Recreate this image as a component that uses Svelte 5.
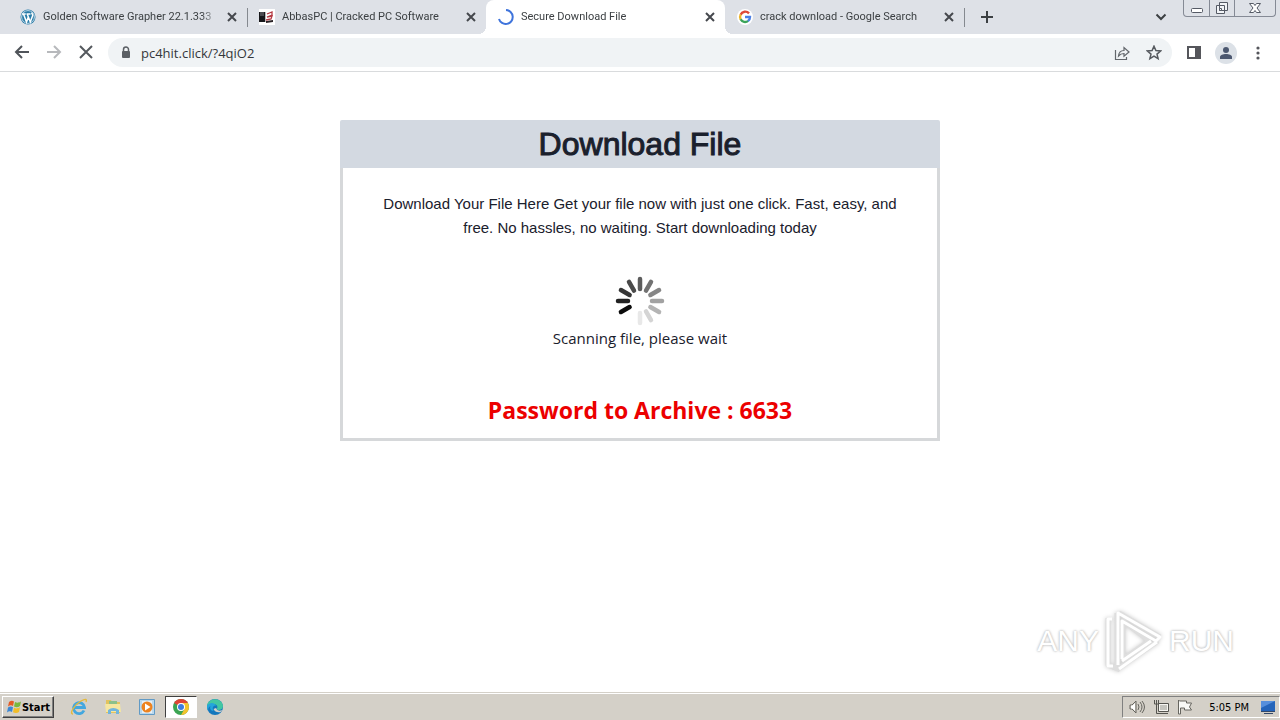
<script lang="ts">
    const tabs = [
        { icon: "wordpress", title: "Golden Software Grapher 22.1.333" },
        { icon: "abbas", title: "AbbasPC | Cracked PC Software" },
        { icon: "loading", title: "Secure Download File" },
        { icon: "google", title: "crack download - Google Search" }
    ];

    let active = $state(2);
    let address = $state("pc4hit.click/?4qiO2");

    // spokes clockwise from the top, fading towards the bottom
    const spokes = [
        "#5c5c5c", "#727272", "#868686", "#a2a2a2", "#b4b4b4", "#d4d4d4",
        "#e8e8e8", "transparent", "#0c0c0c", "#222222", "#363636", "#4a4a4a"
    ].map((color, i) => ({ color, angle: i * 30 }));
</script>

<svelte:head>
    <title>Secure Download File</title>
</svelte:head>

<div class="screen">
    <header class="tabstrip">
        <nav class="tabs" aria-label="Tabs">
            {#each tabs as tab, i}
                <div class="tab" class:active={active === i} class:divided={i === 0 || i === 3}>
                    <button class="tab-main" onclick={() => (active = i)}>
                        <svg viewBox="0 0 16 16" aria-hidden="true">
                            {#if tab.icon === "wordpress"}
                                <circle cx="8" cy="8" r="7.5" fill="#287ba8" />
                                <circle cx="8" cy="8" r="6.4" fill="none" stroke="#fff" stroke-width=".7" />
                                <path d="M2 5h3.8M6.5 5h4M3.5 5l3 8L8.3 8M7.2 5l3.1 8 2.4-6.5c.2-1.2-.9-1.6-1-2.9" fill="none" stroke="#fff" stroke-width="1.5" />
                            {:else if tab.icon === "abbas"}
                                <path fill="#fff" d="M0 0h16v16H0z" />
                                <path fill="#17171b" d="M0 3h6v10H0z" />
                                <path d="M1 3h4v4H1z" fill="#4b4b50" />
                                <path d="M7 12l7-1v2l-7 1z" fill="#2b2226" />
                                <path d="M8 5l5-2v3L8 8l5-1-1 3-5 1" fill="none" stroke="#b53a43" stroke-width="1.3" />
                                <path d="M6.500 3v10" stroke="#bbb" />
                            {:else if tab.icon === "loading"}
                                <path d="M8 1a7 7 0 1 1-7 9" fill="none" stroke="#3f74dc" stroke-width="2" />
                            {:else}
                                <circle cx="8" cy="8" r="8" fill="#fff" />
                                <g fill="none" stroke-width="2.4">
                                    <path d="M12 4.4A5 5 0 0 0 3.6 5.7" stroke="#df4937" />
                                    <path d="M3.7 5.5a5 5 0 0 0 0 5" stroke="#edb52b" />
                                    <path d="M3.6 10.3a5 5 0 0 0 7.6 1.5" stroke="#3ba45a" />
                                    <path d="M8 8h5c0 1.8-.6 3-2 4" stroke="#4b7fe5" />
                                </g>
                            {/if}
                        </svg>
                        <span class="tab-title">{tab.title}</span>
                    </button>
                    <button class="tab-close" aria-label="Close tab">
                        <svg viewBox="0 0 16 16"><path d="M4 4l8 8M12 4l-8 8" stroke="#45484d" stroke-width="2" /></svg>
                    </button>
                </div>
            {/each}
        </nav>
        <button class="new-tab" aria-label="New tab">
            <svg viewBox="0 0 16 16"><path d="M8 2v12M2 8h12" stroke="#3c4043" stroke-width="2" /></svg>
        </button>
        <button class="tab-search" aria-label="Search tabs">
            <svg viewBox="0 0 16 16"><path d="M3.500 5.500L8 10 12.500 5.500" fill="none" stroke="#3c4043" stroke-width="2" /></svg>
        </button>
        <div class="window-controls">
            <button aria-label="Minimize">
                <svg viewBox="0 0 16 16"><rect x="2.500" y="8.500" width="11" height="4" rx="1" fill="#fff" stroke="#555a65" /></svg>
            </button>
            <button aria-label="Restore">
                <svg viewBox="0 0 16 16">
                    <path d="M5.500 2.500h8v8h-8zM2.500 5.500h8v8h-8z" fill="#f2f4f7" stroke="#555a65" />
                    <path d="M5.500 8.500h2v2h-2z" fill="#fff" stroke="#555a65" />
                </svg>
            </button>
            <button class="wide" aria-label="Close">
                <svg viewBox="0 0 16 16"><path d="M2.500 3.500h4L8 5.500l1.500-2h4l-3.500 4.500 3.500 4.500h-4L8 10.500l-1.500 2h-4L6 8z" fill="#fff" stroke="#555a65" /></svg>
            </button>
        </div>
    </header>

    <div class="toolbar">
        <button class="tool" aria-label="Back">
            <svg viewBox="0 0 16 16"><path d="M15 7H2M8 1L2 7l6 6" fill="none" stroke="#50545a" stroke-width="2" /></svg>
        </button>
        <button class="tool" aria-label="Forward" disabled>
            <svg viewBox="0 0 16 16"><path d="M1 7h13M8 1l6 6-6 6" fill="none" stroke="#b7b9bc" stroke-width="2" /></svg>
        </button>
        <button class="tool" aria-label="Stop">
            <svg viewBox="0 0 16 16"><path d="M2 1l12 12M14 1L2 13" stroke="#55595e" stroke-width="2" /></svg>
        </button>
        <div class="omnibox">
            <button class="lock" aria-label="Site information">
                <svg viewBox="0 0 16 16">
                    <rect x="4" y="6" width="8" height="7" rx="1" fill="#5b5f64" />
                    <path d="M5.500 7V4.500a2.500 2.500 0 0 1 5 0V7" fill="none" stroke="#5b5f64" stroke-width="1.500" />
                </svg>
            </button>
            <input type="text" aria-label="Address" bind:value={address} spellcheck="false" />
            <button class="tool" aria-label="Share">
                <svg viewBox="0 0 16 16"><path d="M1.500 5v9.500h11V12M4.500 11c.3-3.500 2-5.500 5.500-5.500v-3l5 4.500-5 4.200V8.500C7.500 8.500 6 9.200 4.500 11z" fill="none" stroke="#62666b" stroke-width="1.200" /></svg>
            </button>
            <button class="tool" aria-label="Bookmark this tab">
                <svg viewBox="0 0 16 16"><path d="M8 1.200l1.900 4.400 4.700.4-3.600 3.100 1.100 4.600L8 11.200l-4.100 2.500L5 9.100 1.400 6l4.700-.4z" fill="none" stroke="#55595e" stroke-width="1.500" /></svg>
            </button>
        </div>
        <button class="tool" aria-label="Side panel">
            <svg viewBox="0 0 16 16"><path d="M2 2h12v11H2z" fill="none" stroke="#55565b" stroke-width="2" /><path d="M9 2h5v11H9z" fill="#55565b" /></svg>
        </button>
        <button class="tool avatar" aria-label="Profile">
            <svg viewBox="0 0 22 22">
                <circle cx="11" cy="11" r="11" fill="#dce1e7" />
                <circle cx="11" cy="8" r="3" fill="#4c5870" />
                <path d="M5 17v-2c0-4 12-4 12 0v2z" fill="#4c5870" />
            </svg>
        </button>
        <button class="tool" aria-label="Menu">
            <svg viewBox="0 0 16 16" fill="#55565b"><circle cx="8" cy="3" r="1.600" /><circle cx="8" cy="8" r="1.600" /><circle cx="8" cy="13" r="1.600" /></svg>
        </button>
    </div>

    <main class="page">
        <section class="card">
            <h1>Download File</h1>
            <div class="card-body">
                <p class="intro">
                    Download Your File Here Get your file now with just one click. Fast, easy, and
                    free. No hassles, no waiting. Start downloading today
                </p>
                <svg class="spinner" viewBox="0 0 50 50" aria-hidden="true">
                    {#each spokes as spoke}
                        <path
                            d="M25 3v10"
                            stroke={spoke.color}
                            stroke-width="4.5"
                            stroke-linecap="round"
                            transform="rotate({spoke.angle} 25 25)"
                        />
                    {/each}
                </svg>
                <p class="status" role="status">Scanning file, please wait</p>
                <p class="password">Password to Archive : 6633</p>
            </div>
        </section>

        <div class="watermark">
            <span>ANY</span>
            <svg viewBox="0 0 58 64" aria-hidden="true">
                <g fill="none" stroke="#dedede" stroke-width="5" stroke-linejoin="round">
                    <path d="M12 4v53M14 4l41 24M3 9v47l12 5M53 32L14 59M18 12v38l26-18z" />
                </g>
                <g fill="none" stroke="#fff" stroke-width="3" stroke-linejoin="round">
                    <path d="M13 56V4l42 24-4 4-34-20v38M7 10H3v47h5M52 33L14 60M46 32L17 52" />
                </g>
            </svg>
            <span>RUN</span>
        </div>
    </main>

    <footer class="taskbar">
        <button class="start">
            <svg viewBox="0 0 16 16" aria-hidden="true">
                <path d="M3 3c2-1.500 3.500-1.500 5-.5L7 7c-1.500-1-3-1-5 .5z" fill="#e55b24" />
                <path d="M9 3c2 1 3.500 1 6-.5L14 7c-2 1.500-4 1.500-6 .5z" fill="#79b83d" />
                <path d="M2 8.500C4 7 5.500 7.200 7 8.200L6 13c-1.500-1-3.200-1-5 .5z" fill="#3b87d5" />
                <path d="M8 8.700c2 1 3.500 1 6-.5L13 13c-2 1.500-4 1.300-6 .3z" fill="#f1bd28" />
            </svg>
            Start
        </button>
        <div class="launchers">
            <button aria-label="Internet Explorer">
                <svg viewBox="0 0 18 18">
                    <path d="M14 12.500A5.500 5.500 0 1 1 14.500 9.500H5" fill="none" stroke="#43a7df" stroke-width="2.800" />
                    <path d="M3 16C-1 16 4 7 11 3c5-2.800 6-1.500 5 1" fill="none" stroke="#e4b93c" stroke-width="1.400" />
                </svg>
            </button>
            <button aria-label="File Explorer">
                <svg viewBox="0 0 18 18">
                    <path d="M2 2h5l1 2h8v11H2z" fill="#e2c35e" />
                    <path d="M5 3h8v4H5z" fill="#8bc08a" />
                    <path d="M1 6h15l1 8H2z" fill="#f6e6a0" />
                    <path d="M4 16v-4q5-4 11 0v4h-3v-3H7v3z" fill="#72b5dc" />
                </svg>
            </button>
            <button aria-label="Media Player">
                <svg viewBox="0 0 18 18">
                    <path d="M1.500 1.500h15v15h-15z" fill="#b9d8ed" stroke="#619ac5" />
                    <path d="M4 3h10v12H4z" fill="#e7eff5" />
                    <circle cx="9" cy="9" r="5.500" fill="#ed831f" />
                    <path d="M7 5.500L12.500 9 7 12.500z" fill="#fff" />
                </svg>
            </button>
            <button class="running" aria-label="Google Chrome">
                <svg viewBox="0 0 18 18">
                    <circle cx="9" cy="9" r="8" fill="#3ba452" />
                    <path d="M9 9L2.100 5A8 8 0 0 1 15.900 5z" fill="#df4435" />
                    <path d="M9 9V5h6.900A8 8 0 0 1 9 17l3.500-6z" fill="#f4c32c" />
                    <circle cx="9" cy="9" r="4" fill="#fff" />
                    <circle cx="9" cy="9" r="3" fill="#3d7de0" />
                </svg>
            </button>
            <button aria-label="Microsoft Edge">
                <svg viewBox="0 0 18 18">
                    <circle cx="9" cy="9" r="8" fill="#1477bd" />
                    <path d="M1 8C2-1 16-1 17 8c0 4-5 5-6.500 3 2-2 .5-5-3-5C4 6 2 7 1 8z" fill="#43c7a2" />
                    <path d="M1 8c2-4 8-4 9 0-3-1-4 2-2.500 5-3 0-4-3-3-5-2 1-3 3-2 5C1 11 1 10 1 8z" fill="#24a5dc" />
                    <path d="M10 10q1 4 6.500 2l-2 2q-5 1-7-3z" fill="#d4d0c8" />
                </svg>
            </button>
        </div>
        <div class="tray">
            <svg viewBox="0 0 16 16" aria-label="Volume" role="img"><path d="M1 6v4h2l4 4V2L3 6zM9 5q2 3 0 6M11 3q4 5 0 10M13 2q5 6 0 12" fill="none" stroke="#66655f" /><path d="M2 6.500v3h1.500L6 12V4L3.500 6.500z" fill="#fff" /></svg>
            <svg viewBox="0 0 16 16" aria-label="Network" role="img"><path d="M5.500 4.500h10v8h-10zM7 14.500h8" fill="#f5f4f0" stroke="#55544f" /><path d="M1.500 1v4h4V1M3.500 1v13.500H7" fill="none" stroke="#55544f" /><path d="M7 6h7v5H7z" fill="#c5c4be" /></svg>
            <svg viewBox="0 0 16 16" aria-label="Action Center" role="img"><path d="M1.500 1v14h2V9h4v2h7l-2-3 2-4h-5V2h-7z" fill="#f8f8f5" stroke="#66655f" /></svg>
            <time>5:05 PM</time>
            <button aria-label="Show desktop">
                <svg viewBox="0 0 16 16"><path d="M1 2h14v10H1z" fill="#2464ba" /><path d="M1 2h14L1 9z" fill="#568fdc" /><path d="M1 12.500h14M4 14.500h9" stroke="#334869" /></svg>
            </button>
        </div>
    </footer>
</div>

<style>
    :global(body) {
        margin: 0;
        background: #fff;
    }

    .screen {
        min-height: 100vh;
        display: flex;
        flex-direction: column;
        font-family: "Liberation Sans", Arial, sans-serif;
    }

    button {
        display: flex;
        align-items: center;
        justify-content: center;
        padding: 0;
        border: 0;
        background: none;
        font: inherit;
        color: inherit;
    }

    svg {
        display: block;
        flex: none;
        width: 16px;
        height: 16px;
    }

    .tabstrip {
        display: flex;
        height: 34px;
        padding: 0 4px 0 8px;
        background: #dee1e7;
    }

    .tabs {
        display: flex;
        flex: 0 1 956px;
        min-width: 0;
    }

    .tab {
        position: relative;
        flex: 1;
        min-width: 0;
        display: flex;
        align-items: center;
        box-sizing: border-box;
        padding: 0 7px 0 12px;
        color: #3c4043;
    }

    .tab.divided::after {
        content: "";
        position: absolute;
        right: -1px;
        top: 8px;
        width: 1px;
        height: 19px;
        background: #85898f;
    }

    .tab.active {
        background: #fff;
        border-radius: 8px 8px 0 0;
    }

    .tab.active::before,
    .tab.active::after {
        content: "";
        position: absolute;
        bottom: 0;
        width: 8px;
        height: 8px;
    }

    .tab.active::before {
        left: -8px;
        background: radial-gradient(circle at 0 0, transparent 8px, #fff 8px);
    }

    .tab.active::after {
        right: -8px;
        background: radial-gradient(circle at 100% 0, transparent 8px, #fff 8px);
    }

    .tab-main {
        flex: 1;
        min-width: 0;
        gap: 7px;
        height: 100%;
    }

    .tab-title {
        flex: 1;
        overflow: hidden;
        white-space: nowrap;
        text-align: left;
        font-family: Roboto, sans-serif;
        font-size: 11px;
        line-height: 16px;
        mask-image: linear-gradient(to left, transparent, #000 16px);
    }

    .tab-close {
        width: 16px;
        margin-left: 6px;
    }

    .new-tab,
    .tab-search {
        width: 32px;
        margin-left: 7px;
    }

    .tab-search {
        margin-left: auto;
        margin-right: 6px;
    }

    .window-controls {
        display: flex;
        height: 16px;
        border: 1px solid #858a95;
        border-top: 0;
        border-radius: 0 0 4px 4px;
    }

    .window-controls button {
        width: 25px;
    }

    .window-controls button + button {
        border-left: 1px solid #858a95;
    }

    .window-controls .wide {
        width: 41px;
    }

    .toolbar {
        display: flex;
        align-items: center;
        height: 37px;
        padding: 0 6px;
        border-bottom: 1px solid #d9dbdd;
    }

    .tool {
        width: 32px;
        height: 28px;
    }

    .avatar svg {
        width: 22px;
        height: 22px;
    }

    .omnibox {
        flex: 1;
        display: flex;
        align-items: center;
        height: 29px;
        margin: 0 6px;
        padding: 0 2px 0 5px;
        border-radius: 16px;
        background: #f0f3f5;
    }

    .lock {
        width: 26px;
    }

    .omnibox input {
        flex: 1;
        min-width: 0;
        padding: 0 2px;
        border: 0;
        outline: 0;
        background: none;
        color: #34373b;
        font-family: "Open Sans", sans-serif;
        font-size: 13px;
    }

    .page {
        position: relative;
        flex: 1;
        padding: 48px 16px;
    }

    .card {
        max-width: 600px;
        margin: 0 auto;
        background: #d3d9e1;
        border-radius: 2px;
        color: #1a202c;
        text-align: center;
    }

    h1 {
        margin: 0;
        font-size: 32px;
        font-weight: 400;
        line-height: 48px;
        -webkit-text-stroke: 1px #1a202c;
    }

    .card-body {
        padding: 24px 24px 10px;
        border: 3px solid #d6d8da;
        border-top: 0;
        background: #fff;
    }

    p {
        margin: 0;
    }

    .intro {
        font-size: 15px;
        line-height: 24px;
    }

    .spinner {
        width: 50px;
        height: 50px;
        margin: 36px auto 0;
    }

    .status {
        font-family: "Open Sans", sans-serif;
        font-size: 15px;
        line-height: 24px;
    }

    .password {
        margin-top: 42px;
        color: #ec0000;
        font-family: "Open Sans", sans-serif;
        font-size: 23px;
        font-weight: 700;
        line-height: 36px;
    }

    .watermark {
        position: absolute;
        right: 46px;
        bottom: 20px;
        display: flex;
        align-items: center;
        gap: 6px;
        color: #fff;
        font-size: 30px;
        line-height: 64px;
        text-shadow: 0 0 3px #b8b8b8, 0 0 2px #cfcfcf;
    }

    .watermark svg {
        width: 58px;
        height: 64px;
        filter: drop-shadow(0 0 2px #ccc);
    }

    .taskbar {
        display: flex;
        align-items: center;
        height: 26px;
        padding-left: 2px;
        border-top: 1px solid #fff;
        background: #d4d0c8;
        box-shadow: 0 -1px #d4d0c8;
        font-family: "DejaVu Sans Condensed", sans-serif;
        font-size: 11px;
        color: #000;
    }

    .start {
        box-sizing: border-box;
        width: 52px;
        height: 22px;
        border: 1px solid;
        border-color: #fff #404040 #404040 #fff;
        box-shadow: inset -1px -1px #808080;
        font-weight: 700;
    }

    .launchers {
        display: flex;
        padding-left: 9px;
        gap: 2px;
    }

    .launchers button {
        box-sizing: border-box;
        width: 32px;
        height: 22px;
    }

    .launchers svg {
        width: 18px;
        height: 18px;
    }

    .launchers .running {
        border: 1px solid;
        border-color: #404040 #fff #fff #404040;
        background: #fff;
    }

    .tray {
        display: flex;
        align-items: center;
        gap: 8px;
        box-sizing: border-box;
        height: 22px;
        margin-left: auto;
        padding: 0 3px 0 6px;
        border: 1px solid;
        border-color: #808080 #fff #fff #808080;
    }

    .tray time {
        margin: 0 3px 0 8px;
    }
</style>
